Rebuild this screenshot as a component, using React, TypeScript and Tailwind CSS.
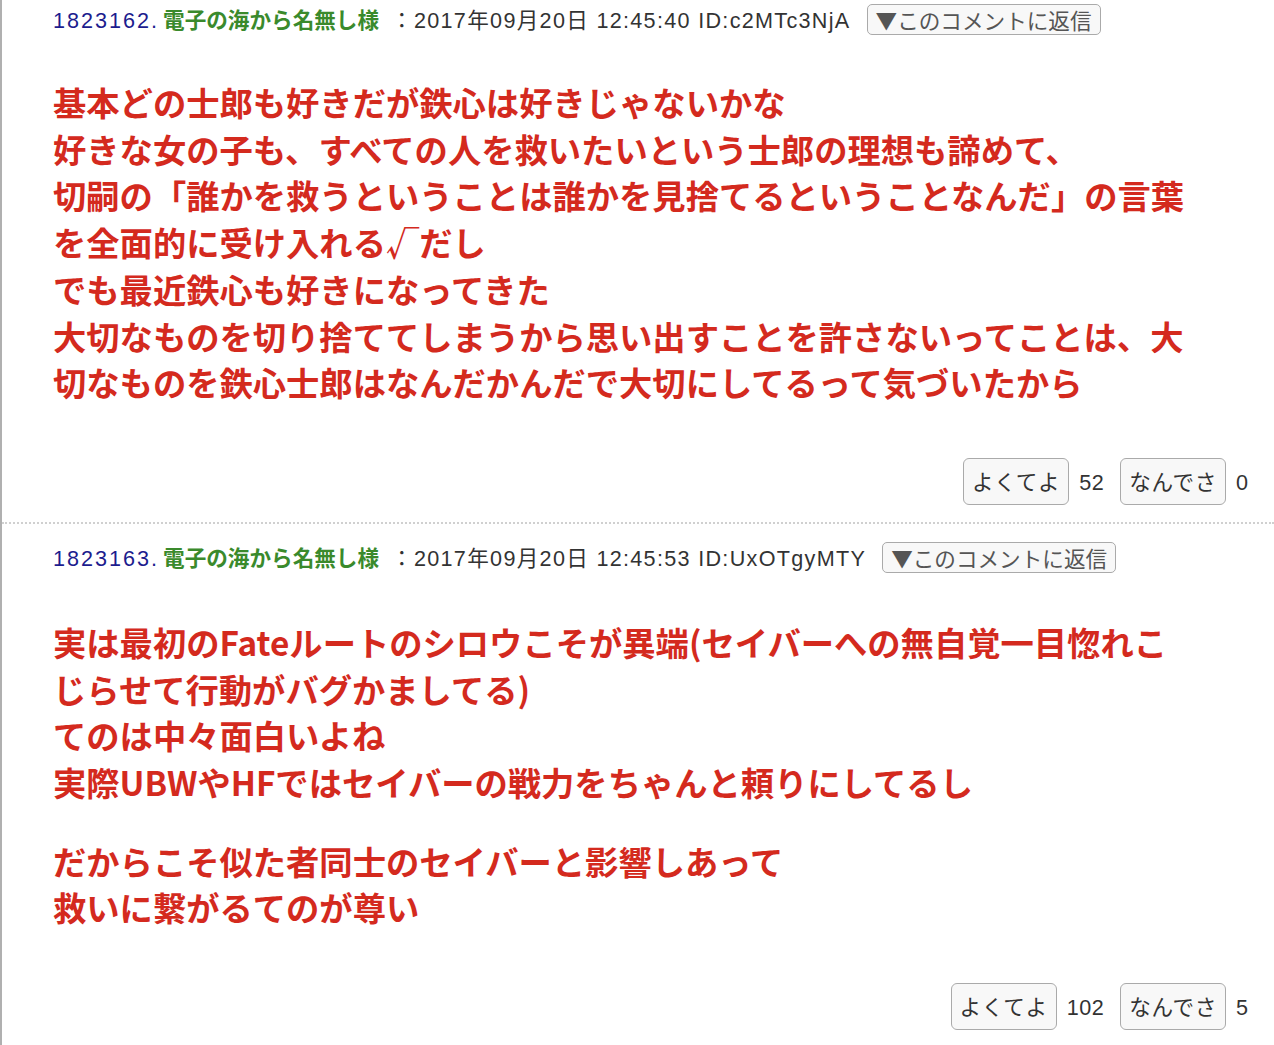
import React from "react";

const FONT = '"Noto Sans CJK JP", "Noto Sans", sans-serif';
const HEAD = '"Liberation Sans", "Noto Sans CJK JP", sans-serif';

type PostProps = {
  no: string;
  date: string;
  id: string;
  lines: string[][];
  good: string;
  bad: string;
  top: string;
  bodyTop: string;
};

function Post({ no, date, id, lines, good, bad, top, bodyTop }: PostProps) {
  return (
    <div className={`pl-[51px] pr-[26px] pb-[17px] ${top}`}>
      <div className="flex items-center h-[31px] text-[21.6px] whitespace-nowrap">
        <div className="leading-[31px]">
          <span className="text-[#1c1c8e] tracking-[2px]" style={{ fontFamily: HEAD }}>
            {no}.
          </span>
          <span className="ml-[4px] font-bold text-[#3a8a2c]" style={{ fontFamily: FONT }}>
            電子の海から名無し様
          </span>
          <span className="ml-[12px] text-[#333] tracking-[1.3px]" style={{ fontFamily: HEAD }}>
            ：{date} ID:{id}
          </span>
        </div>
        <button
          className="ml-[16px] h-[31px] px-[8px] flex items-center rounded-[5px] border border-[#aaa] bg-[#f8f8f8] text-[#555] text-[21.6px] leading-none"
          style={{ fontFamily: FONT }}
        >
          ▼このコメントに返信
        </button>
      </div>
      <div className={`${bodyTop} font-bold text-[#d42a1e] text-[33.3px] leading-[46.7px]`}>
        {lines.map((para, i) => (
          <div key={i} className={i > 0 ? "mt-[32px]" : ""}>
            {para.map((l, j) => (
              <div key={j} className="whitespace-nowrap">
                {l}
              </div>
            ))}
          </div>
        ))}
      </div>
      <div className="mt-[52px] flex justify-end items-baseline text-[21.6px] text-[#333]">
        <button className="h-[47px] px-[8px] rounded-[6px] border border-[#aaa] bg-[#f8f8f8] text-[#333] text-[21.6px] tracking-[0.6px]">
          よくてよ
        </button>
        <span className="ml-[10px] tracking-[0.5px]" style={{ fontFamily: HEAD }}>
          {good}
        </span>
        <button className="ml-[16px] h-[47px] px-[8px] rounded-[6px] border border-[#aaa] bg-[#f8f8f8] text-[#333] text-[21.6px] tracking-[0.6px]">
          なんでさ
        </button>
        <span className="ml-[10px]" style={{ fontFamily: HEAD }}>
          {bad}
        </span>
      </div>
    </div>
  );
}

export default function App() {
  return (
    <div
      className="min-h-[1045px] w-[1274px] bg-white border-l-2 border-[#b0b0b0] overflow-hidden"
      style={{ fontFamily: FONT }}
    >
      <Post
        top="pt-[4px]"
        bodyTop="mt-[44px]"
        no="1823162"
        date="2017年09月20日 12:45:40"
        id="c2MTc3NjA"
        good="52"
        bad="0"
        lines={[
          [
            "基本どの士郎も好きだが鉄心は好きじゃないかな",
            "好きな女の子も、すべての人を救いたいという士郎の理想も諦めて、",
            "切嗣の「誰かを救うということは誰かを見捨てるということなんだ」の言葉",
            "を全面的に受け入れる√だし",
            "でも最近鉄心も好きになってきた",
            "大切なものを切り捨ててしまうから思い出すことを許さないってことは、大",
            "切なものを鉄心士郎はなんだかんだで大切にしてるって気づいたから",
          ],
        ]}
      />
      <div className="border-t-2 border-dotted border-[#d0d0d0]" />
      <Post
        top="pt-[18px]"
        bodyTop="mt-[46px]"
        no="1823163"
        date="2017年09月20日 12:45:53"
        id="UxOTgyMTY"
        good="102"
        bad="5"
        lines={[
          [
            "実は最初のFateルートのシロウこそが異端(セイバーへの無自覚一目惚れこ",
            "じらせて行動がバグかましてる)",
            "てのは中々面白いよね",
            "実際UBWやHFではセイバーの戦力をちゃんと頼りにしてるし",
          ],
          ["だからこそ似た者同士のセイバーと影響しあって", "救いに繋がるてのが尊い"],
        ]}
      />
    </div>
  );
}
